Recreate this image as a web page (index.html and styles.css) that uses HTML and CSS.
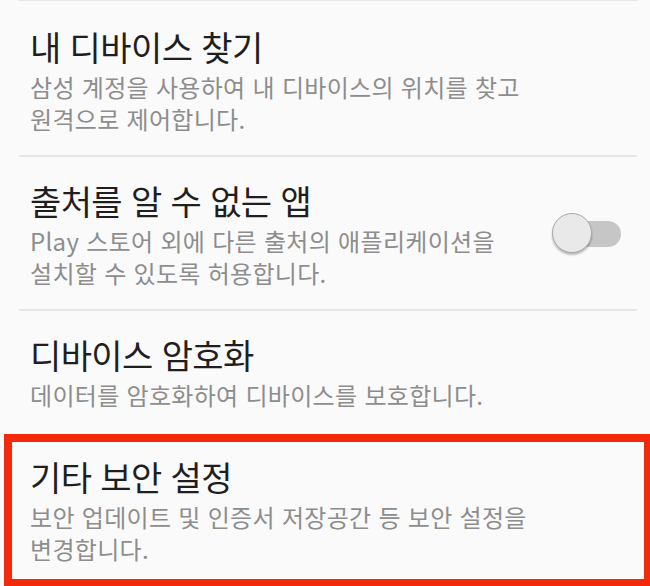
FILE: index.html
```html
<!DOCTYPE html>
<html lang="ko">
<head>
    <meta charset="UTF-8">
    <title>보안</title>
    <link rel="stylesheet" href="styles.css">
</head>
<body>
    <div class="list">
        <div class="item item-first">
            <div class="text">
                <div class="title">내 디바이스 찾기</div>
                <div class="desc">삼성 계정을 사용하여 내 디바이스의 위치를 찾고<br>원격으로 제어합니다.</div>
            </div>
        </div>
        <div class="item">
            <div class="text">
                <div class="title">출처를 알 수 없는 앱</div>
                <div class="desc">Play 스토어 외에 다른 출처의 애플리케이션을<br>설치할 수 있도록 허용합니다.</div>
            </div>
            <div class="switch">
                <div class="switch-track"></div>
                <div class="switch-thumb"></div>
            </div>
        </div>
        <div class="item item-last">
            <div class="text">
                <div class="title">디바이스 암호화</div>
                <div class="desc">데이터를 암호화하여 디바이스를 보호합니다.</div>
            </div>
        </div>
    </div>
    <!-- 강조 표시된 항목 -->
    <div class="highlight">
        <div class="item item-marked">
            <div class="text">
                <div class="title">기타 보안 설정</div>
                <div class="desc">보안 업데이트 및 인증서 저장공간 등 보안 설정을<br>변경합니다.</div>
            </div>
        </div>
    </div>
</body>
</html>
```

FILE: styles.css
```css
/* 기본 스타일 */
body {
    margin: 0;
    padding: 0;
    background-color: #fafafa;
    font-family: "Noto Sans CJK KR", "Noto Sans", sans-serif;
    height: 586px;
    overflow: hidden;
}
/* 설정 목록 */
.list {
    margin: 0 13px 0 19px;
}
.item {
    display: flex;
    align-items: center;
    border-top: 2px solid #e6e6e6;
    padding: 22px 0 20px 11px;
}
.item-first {
    border-top-width: 1px;
    padding-top: 24px;
}
.item-last {
    padding-bottom: 23px;
}
.text {
    flex: 1;
}
.title {
    font-size: 34px;
    line-height: 44px;
    letter-spacing: -0.6px;
    color: #1f1f1f;
    margin-bottom: 2px;
}
.desc {
    font-size: 24px;
    line-height: 32px;
    letter-spacing: 0.3px;
    color: #8d8d8d;
}
/* 토글 스위치 */
.switch {
    position: relative;
    width: 69px;
    height: 42px;
    margin-right: 16px;
}
.switch-track {
    position: absolute;
    left: 21px;
    top: 8px;
    width: 48px;
    height: 26px;
    border-radius: 13px;
    background-color: #c6c6c6;
}
.switch-thumb {
    position: absolute;
    left: 0;
    top: 0;
    width: 38px;
    height: 38px;
    border-radius: 50%;
    background-color: #e9e9e9;
    border: 1px solid #a9a9a9;
    box-shadow: 0 2px 2px rgba(0, 0, 0, 0.25);
}
/* 빨간 테두리 강조 */
.highlight {
    margin-left: 4px;
    border: 8px solid #f4290b;
    border-right-width: 6px;
    box-sizing: border-box;
    height: 153px;
}
.item-marked {
    border-top: none;
    padding: 13px 0 10px 18px;
}
```
